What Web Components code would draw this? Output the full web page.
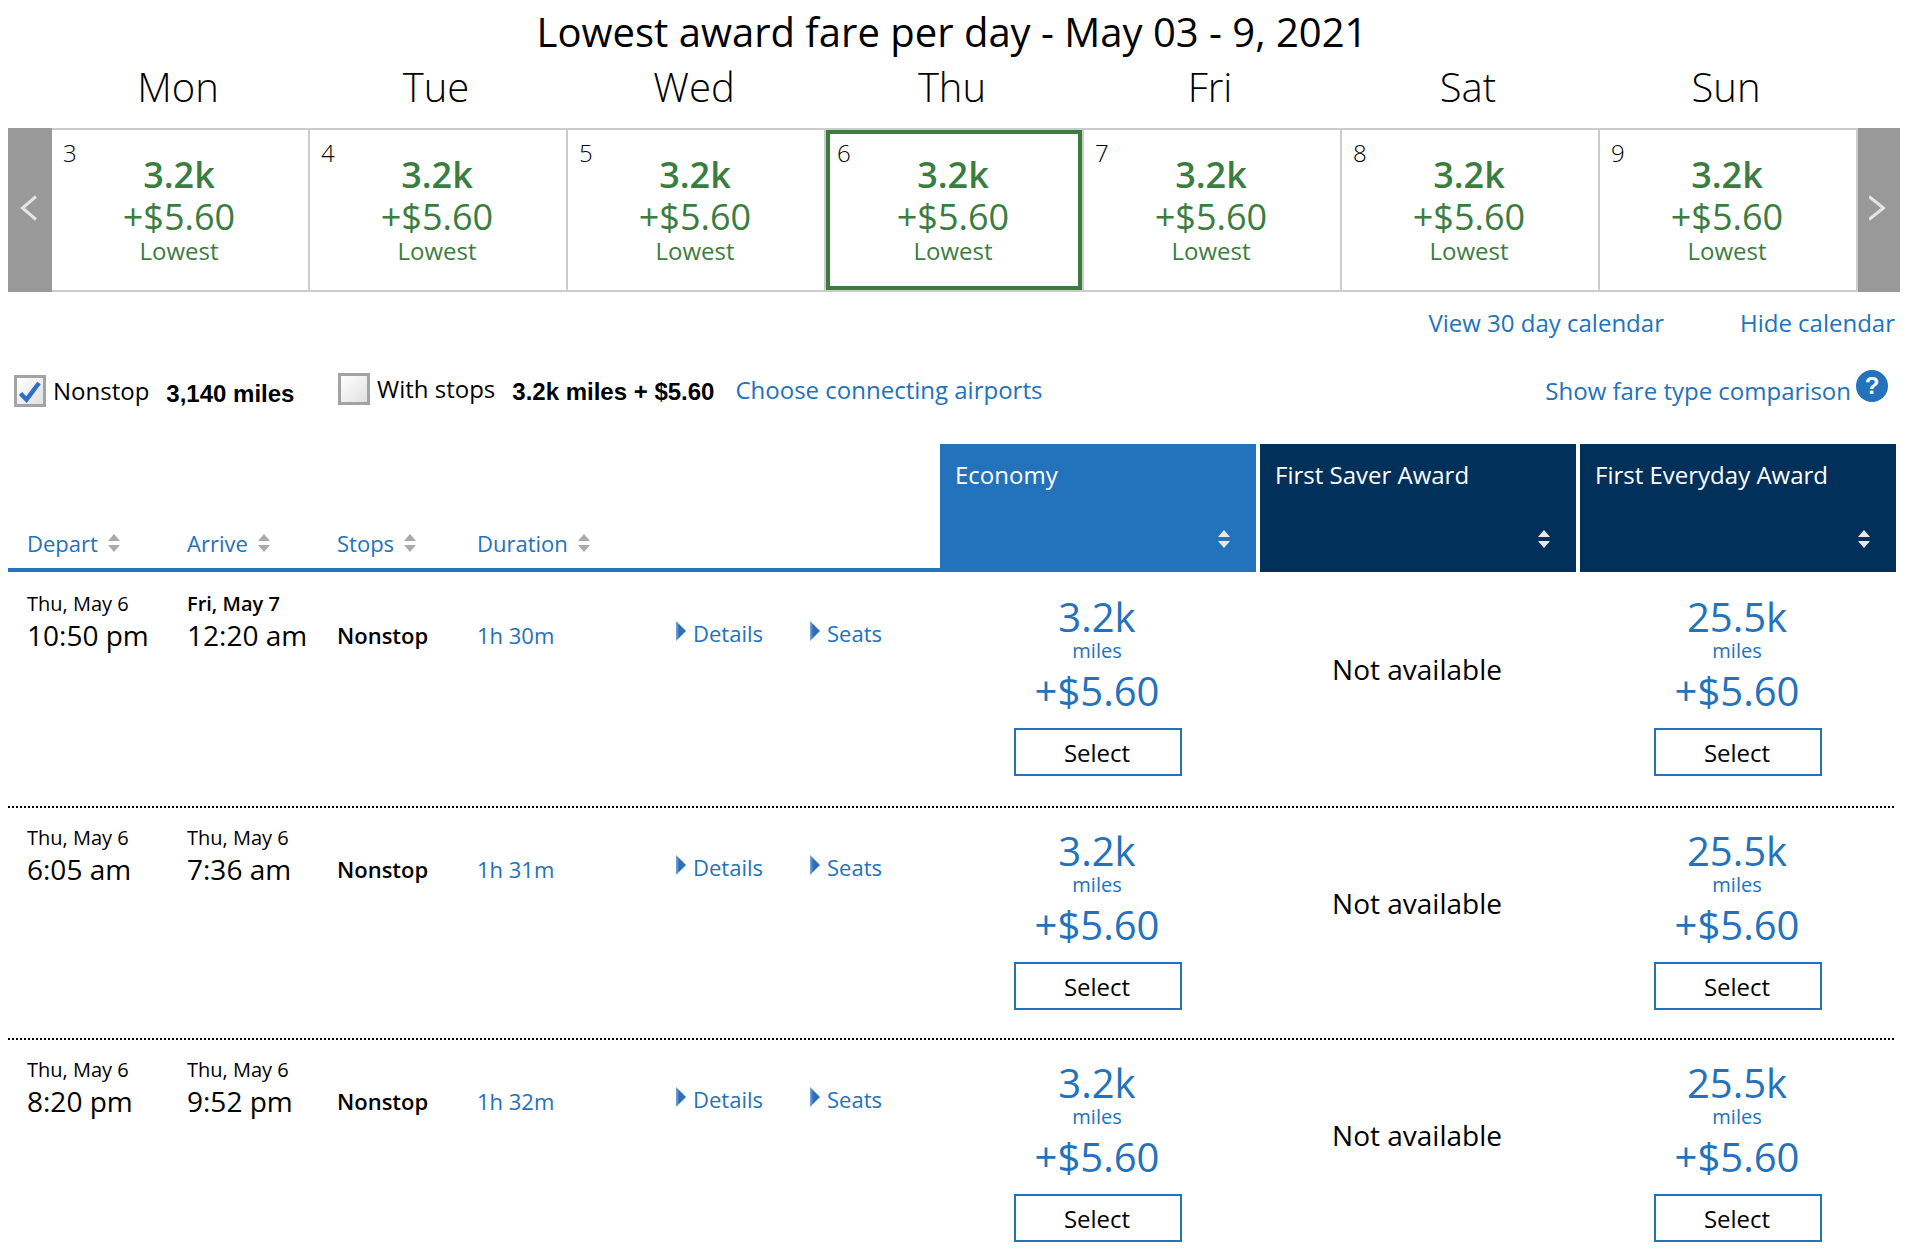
<!DOCTYPE html>
<html>
<head>
<meta charset="utf-8">
<title>Lowest award fare</title>
<style>
  html, body { margin: 0; background: #fff; }
  body { width: 1914px; height: 1256px; overflow: hidden; font-family: "Open Sans", sans-serif; color: #000; }
</style>
</head>
<body>
<page-title>Lowest award fare per day - May 03 - 9, 2021</page-title>

<week-strip>
  <day-cell day="3"></day-cell>
  <day-cell day="4"></day-cell>
  <day-cell day="5"></day-cell>
  <day-cell day="6" selected></day-cell>
  <day-cell day="7"></day-cell>
  <day-cell day="8"></day-cell>
  <day-cell day="9"></day-cell>
</week-strip>

<calendar-links></calendar-links>
<filter-bar></filter-bar>

<flight-head></flight-head>
<flight-row style="height:234px" depart-date="Thu, May 6" depart="10:50 pm" arrive-date="Fri, May 7" arrive="12:20 am" duration="1h 30m" next-day></flight-row>
<flight-row style="height:232px" depart-date="Thu, May 6" depart="6:05 am" arrive-date="Thu, May 6" arrive="7:36 am" duration="1h 31m" divided></flight-row>
<flight-row depart-date="Thu, May 6" depart="8:20 pm" arrive-date="Thu, May 6" arrive="9:52 pm" duration="1h 32m" divided></flight-row>

<script>
const sortIcon = (color) => `
  <svg width="12" height="18" viewBox="0 0 12 18" style="display:block;filter:blur(.5px)">
    <path d="M6 0 L12 7 H0 Z" fill="${color}"/>
    <path d="M0 11 H12 L6 18 Z" fill="${color}"/>
  </svg>`;

class PageTitle extends HTMLElement {
  constructor() {
    super();
    this.attachShadow({ mode: 'open' });
    this.shadowRoot.innerHTML = `
      <style>
        :host { display: block; text-align: center; padding: 8px 10px 0 0; height: 48px; font-size: 40px; line-height: 48px; }
      </style>
      <slot></slot>`;
  }
}

class WeekStrip extends HTMLElement {
  constructor() {
    super();
    this.attachShadow({ mode: 'open' });
    const days = ['Mon', 'Tue', 'Wed', 'Thu', 'Fri', 'Sat', 'Sun'];
    this.shadowRoot.innerHTML = `
      <style>
        :host { display: block; margin: 0 14px 0 8px; }
        .names { display: grid; grid-template-columns: repeat(7, 258px); padding-left: 41px; height: 48px; margin: 7px 0 17px; }
        .names div { text-align: center; font-size: 40px; font-weight: 300; line-height: 48px; }
        .strip { display: flex; height: 164px; }
        .arrow { background: #999; display: flex; align-items: center; justify-content: center; }
        .prev { width: 45px; }
        .next { width: 43px; }
        .cells { display: flex; border-top: 2px solid #ccc; border-bottom: 2px solid #ccc; }
        .arrow svg { display: block; margin-top: -4px; }
      </style>
      <div class="names">${days.map(d => `<div>${d}</div>`).join('')}</div>
      <div class="strip">
        <div class="arrow prev"><svg width="20" height="26" viewBox="0 0 20 26"><path d="M16 1.5 L2.5 13 L16 24.5" fill="none" stroke="#e4e4e4" stroke-width="3"/></svg></div>
        <div class="cells"><slot></slot></div>
        <div class="arrow next"><svg width="20" height="26" viewBox="0 0 20 26"><path d="M0 1.5 L14.5 13 L0 24.5" fill="none" stroke="#e4e4e4" stroke-width="3"/></svg></div>
      </div>`;
  }
}

class DayCell extends HTMLElement {
  constructor() {
    super();
    this.attachShadow({ mode: 'open' });
    this.shadowRoot.innerHTML = `
      <style>
        :host { display: block; width: 258px; box-sizing: border-box; border-right: 2px solid #ccc; }
        :host([selected]) .box { box-shadow: inset 0 0 0 4px #3b7d3f; }
        .box { display: grid; height: 160px; }
        .day, .fare { grid-area: 1 / 1; }
        .day { font-size: 24px; font-weight: 300; line-height: 32px; padding: 7px 0 0 11px; }
        .fare { text-align: center; color: #3b7d3f; padding: 25px 2px 0 0; }
        .miles { font-size: 36px; font-weight: 600; line-height: 40px; }
        .cash { font-size: 36px; line-height: 44px; }
        .note { font-size: 24px; line-height: 30px; margin-top: -3px; }
      </style>
      <div class="box">
        <div class="day">${this.getAttribute('day')}</div>
        <div class="fare">
          <div class="miles">3.2k</div>
          <div class="cash">+$5.60</div>
          <div class="note">Lowest</div>
        </div>
      </div>`;
  }
}

class CalendarLinks extends HTMLElement {
  constructor() {
    super();
    this.attachShadow({ mode: 'open' });
    this.shadowRoot.innerHTML = `
      <style>
        :host { display: flex; justify-content: flex-end; gap: 76px; margin-top: 15px; padding-right: 19px; font-size: 24px; line-height: 32px; color: #2272bc; }
      </style>
      <span>View 30 day calendar</span>
      <span>Hide calendar</span>`;
  }
}

class CheckBox extends HTMLElement {
  constructor() {
    super();
    this.attachShadow({ mode: 'open' });
    const tick = this.hasAttribute('checked')
      ? '<svg width="26" height="26" viewBox="0 0 26 26"><path d="M3.5 15.5 L9.5 21.5 L22 5" fill="none" stroke="#2b70c6" stroke-width="4.5"/></svg>'
      : '';
    this.shadowRoot.innerHTML = `
      <style>
        :host { display: flex; align-items: center; justify-content: center; width: 32px; height: 32px; box-sizing: border-box; border: 3px solid #a3a3a3; background: linear-gradient(135deg, #fff, #e0e0e0); }
        svg { display: block; filter: blur(.6px); }
      </style>
      ${tick}`;
  }
}

class FilterBar extends HTMLElement {
  constructor() {
    super();
    this.attachShadow({ mode: 'open' });
    this.shadowRoot.innerHTML = `
      <style>
        :host { display: flex; align-items: flex-start; height: 72px; margin-top: 31px; padding-left: 14px; padding-bottom: 2px; font-size: 24px; line-height: 32px; }
        .opt { display: flex; align-items: center; }
        .nonstop { margin-top: 2px; width: 324px; }
        .label { margin-left: 7px; }
        b { font-family: "Liberation Sans", Arial, sans-serif; font-weight: 700; margin-left: 17px; padding-top: 6px; }
        a { color: #2272bc; margin-left: 21px; margin-top: 2px; }
        .compare { margin-left: auto; display: flex; align-items: flex-start; padding-right: 26px; color: #2272bc; }
        .compare span { margin-top: 5px; }
        .help { width: 32px; height: 32px; border-radius: 50%; background: #2272bc; color: #fff; text-align: center; margin-left: 5px; font: 700 24px/32px "Liberation Sans", sans-serif; }
      </style>
      <div class="opt nonstop"><check-box checked></check-box><span class="label">Nonstop</span><b>3,140 miles</b></div>
      <div class="opt stops"><check-box></check-box><span class="label">With stops</span><b>3.2k miles + $5.60</b><a>Choose connecting airports</a></div>
      <div class="compare"><span>Show fare type comparison</span><div class="help">?</div></div>`;
  }
}

class FlightHead extends HTMLElement {
  constructor() {
    super();
    this.attachShadow({ mode: 'open' });
    const sortable = (name) => `<div class="col"><span>${name}</span>${sortIcon('#aaa')}</div>`;
    const fare = (name, cls) => `<div class="fare ${cls}"><div>${name}</div><div class="arrows">${sortIcon('#e8e8e8')}</div></div>`;
    this.shadowRoot.innerHTML = `
      <style>
        :host { display: flex; height: 128px; margin-left: 8px; width: 1888px; gap: 4px; }
        .left { width: 932px; box-sizing: border-box; margin-right: -4px; border-bottom: 4px solid #2272bc; display: grid; grid-template-columns: 160px 150px 140px 1fr; padding: 0 0 0 19px; align-items: end; font-size: 22px; color: #2272bc; }
        .col { display: flex; align-items: center; gap: 10px; height: 30px; margin-bottom: 10px; }
        .fare { width: 316px; box-sizing: border-box; padding: 14px 16px 0 15px; color: #fff; font-size: 24px; line-height: 34px; display: flex; flex-direction: column; }
        .blue { background: #2272bc; }
        .navy { background: #01305b; }
        .arrows { margin-top: auto; margin-bottom: 24px; align-self: flex-end; padding-right: 10px; }
      </style>
      <div class="left">${['Depart', 'Arrive', 'Stops', 'Duration'].map(sortable).join('')}</div>
      ${fare('Economy', 'blue')}${fare('First Saver Award', 'navy')}${fare('First Everyday Award', 'navy')}`;
  }
}

class FareCell extends HTMLElement {
  constructor() {
    super();
    this.attachShadow({ mode: 'open' });
    this.shadowRoot.innerHTML = `
      <style>
        :host { display: block; width: 316px; text-align: center; color: #2272bc; }
        .miles, .cash, .unit { padding-right: 2px; }
        .miles, .cash { font-size: 40px; line-height: 44px; }
        .unit { font-size: 20px; line-height: 22px; margin-top: 1px; }
        .cash { margin-top: 5px; line-height: 48px; }
        .select { display: block; box-sizing: border-box; width: 168px; height: 48px; margin: 13px auto 0; padding-right: 2px; border: 2px solid #2272bc; color: #000; font-size: 24px; line-height: 46px; }
      </style>
      <div class="miles">${this.getAttribute('miles')}</div>
      <div class="unit">miles</div>
      <div class="cash">+$5.60</div>
      <div class="select">Select</div>`;
  }
}

class FlightRow extends HTMLElement {
  constructor() {
    super();
    this.attachShadow({ mode: 'open' });
    const a = (n) => this.getAttribute(n);
    const arrow = '<svg width="10" height="20" viewBox="0 0 10 20"><defs><linearGradient id="fade"><stop offset="0" stop-color="#7fa6d4"/><stop offset=".35" stop-color="#2a6fb8"/></linearGradient></defs><path d="M0 0 L10 10 L0 20 Z" fill="url(#fade)"/></svg>';
    this.shadowRoot.innerHTML = `
      <style>
        :host { display: flex; width: 1888px; margin-left: 8px; height: 235px; box-sizing: border-box; gap: 4px; padding-top: 23px; }
        :host([divided]) { padding-top: 23px; background: linear-gradient(90deg, #000 2px, transparent 2px) 0 0 / 4px 2px repeat-x; }
        .info { width: 928px; box-sizing: border-box; padding-left: 19px; margin-top: -7px; display: grid; grid-template-columns: 160px 150px 140px 199px 134px 1fr; align-items: start; }
        .date { font-size: 20px; line-height: 30px; margin-top: 1px; }
        .time { font-size: 28px; line-height: 33px; }
        .next-day { font-weight: 600; }
        .bold, .dur, .link { margin-top: 30px; font-size: 22px; line-height: 34px; }
        .bold { font-weight: 600; }
        .dur { color: #2272bc; }
        .link { color: #2272bc; display: flex; align-items: center; gap: 7px; margin-top: 28px; }
        .link svg { margin-top: -4px; filter: blur(.4px); }
        .na { width: 314px; padding-right: 2px; text-align: center; font-size: 28px; line-height: 40px; padding-top: 54px; }
      </style>
      <div class="info">
        <div><div class="date">${a('depart-date')}</div><div class="time">${a('depart')}</div></div>
        <div><div class="date ${this.hasAttribute('next-day') ? 'next-day' : ''}">${a('arrive-date')}</div><div class="time">${a('arrive')}</div></div>
        <div class="bold">Nonstop</div>
        <div class="dur">${a('duration')}</div>
        <div class="link">${arrow}<span>Details</span></div>
        <div class="link">${arrow}<span>Seats</span></div>
      </div>
      <fare-cell miles="3.2k"></fare-cell>
      <div class="na">Not available</div>
      <fare-cell miles="25.5k"></fare-cell>`;
  }
}

customElements.define('page-title', PageTitle);
customElements.define('day-cell', DayCell);
customElements.define('week-strip', WeekStrip);
customElements.define('calendar-links', CalendarLinks);
customElements.define('check-box', CheckBox);
customElements.define('filter-bar', FilterBar);
customElements.define('flight-head', FlightHead);
customElements.define('fare-cell', FareCell);
customElements.define('flight-row', FlightRow);
</script>
</body>
</html>
